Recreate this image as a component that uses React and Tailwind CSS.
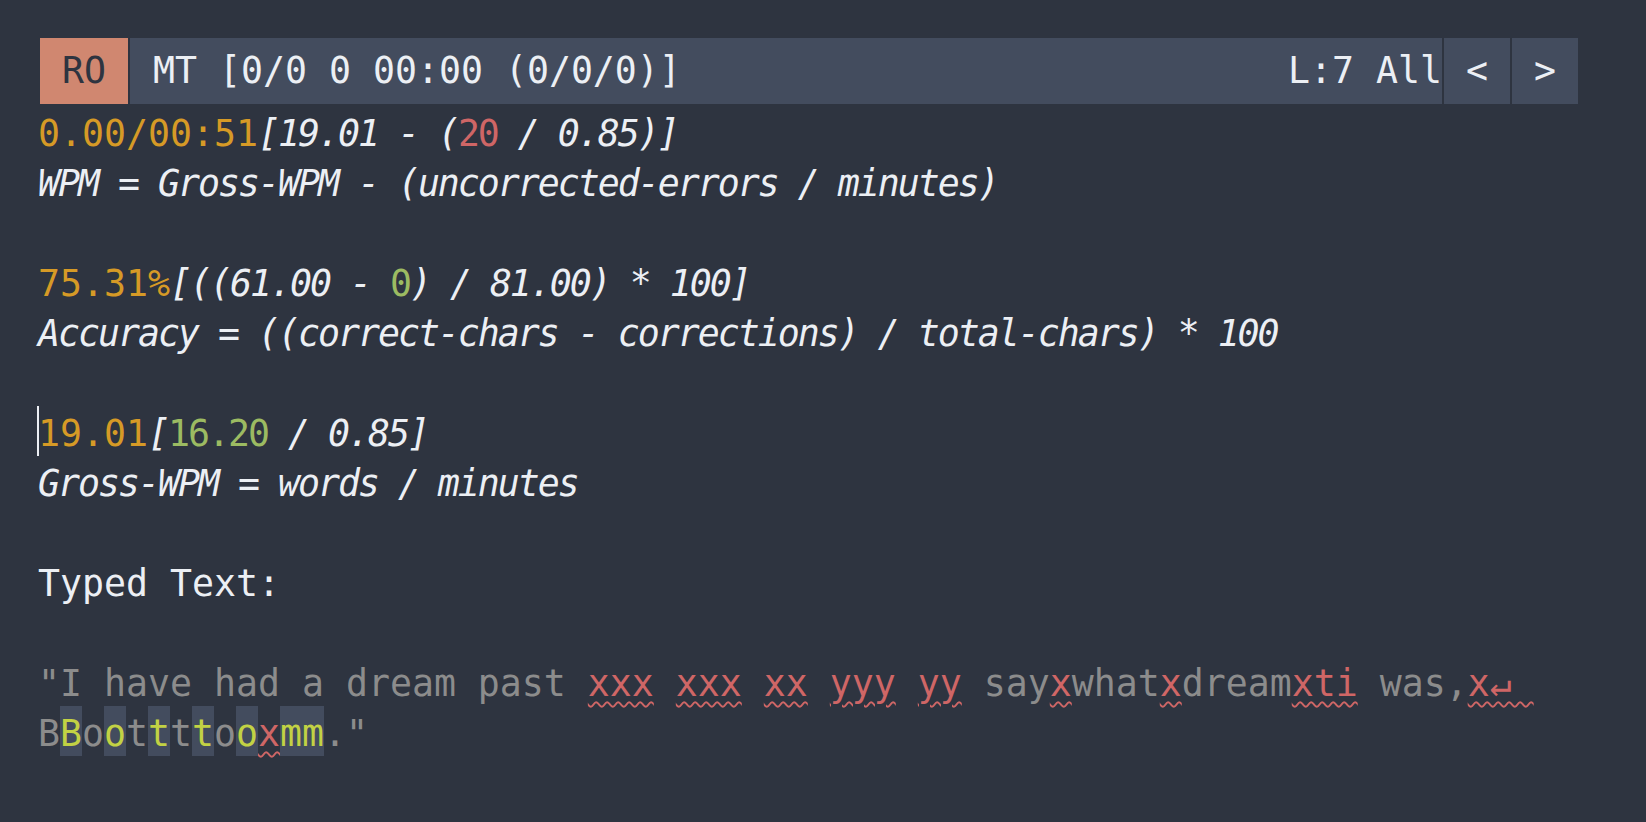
const mono = "font-['DejaVu_Sans_Mono','Liberation_Mono',monospace]";

const it = "italic tracking-[-2px]";
const gold = "text-[#d69a26]";
const green = "tracking-[-2px] text-[#9cbb62]";
const err = "text-[#cf6666] underline decoration-wavy decoration-[#cf6666] decoration-[1.5px] underline-offset-[5px]";
const gray = "text-[#8c8c8c]";
const hit = "inline-block h-[50px] align-top leading-[56px] text-[#c2d244] bg-[#434c5e]";

function Row({ children, className = "" }) {
  return <div className={`h-[50px] leading-[56px] whitespace-pre ${className}`}>{children}</div>;
}

function ModeLine() {
  return (
    <div className="ml-[2px] flex h-[66px] w-[1538px] gap-[2px] leading-[66px] text-[#eceff4]">
      <div className="w-[88px] bg-[#d08770] text-center text-[#2e3440]">RO</div>
      <div className="flex flex-1 justify-between bg-[#434c5e] pl-[23px] whitespace-pre">
        <span>MT [0/0 0 00:00 (0/0/0)]</span>
        <span>L:7 All</span>
      </div>
      <div className="w-[66px] bg-[#434c5e] text-center">&lt;</div>
      <div className="w-[66px] bg-[#434c5e] text-center">&gt;</div>
    </div>
  );
}

export default function App() {
  return (
    <div className={`min-h-screen bg-[#2e3440] pl-[38px] pt-[38px] text-[36.54px] text-[#eceff4] ${mono}`}>
      <ModeLine />
      <div className="mt-[2px]">
        <Row>
          <span className={gold}>0.00/00:51</span>
          <span className={it}>[19.01 - (</span>
          <span className="tracking-[-2px] text-[#cf6666]">20</span>
          <span className={it}> / 0.85)]</span>
        </Row>
        <Row className={it}>WPM = Gross-WPM - (uncorrected-errors / minutes)</Row>
        <Row />
        <Row>
          <span className={gold}>75.31%</span>
          <span className={it}>[((61.00 - </span>
          <span className={green}>0</span>
          <span className={it}>) / 81.00) * 100]</span>
        </Row>
        <Row className={it}>Accuracy = ((correct-chars - corrections) / total-chars) * 100</Row>
        <Row />
        <Row className="relative">
          <span className="absolute left-[-1px] top-0 h-[50px] w-[2px] bg-[#eceff4]" />
          <span className={gold}>19.01</span>
          <span className={it}>[</span>
          <span className={green}>16.20</span>
          <span className={it}> / 0.85]</span>
        </Row>
        <Row className={it}>Gross-WPM = words / minutes</Row>
        <Row />
        <Row>Typed Text:</Row>
        <Row />
        <Row className={gray}>
          <span>"I have had a dream past </span>
          <span className={err}>xxx</span> <span className={err}>xxx</span>{" "}
          <span className={err}>xx</span> <span className={err}>yyy</span>{" "}
          <span className={err}>yy</span>
          <span> say</span>
          <span className={err}>x</span>
          <span>what</span>
          <span className={err}>x</span>
          <span>dream</span>
          <span className={err}>xti</span>
          <span> was,</span>
          <span className={err}>x↵ </span>
        </Row>
        <Row className={gray}>
          <span>B</span>
          <span className={hit}>B</span>
          <span>o</span>
          <span className={hit}>o</span>
          <span>t</span>
          <span className={hit}>t</span>
          <span>t</span>
          <span className={hit}>t</span>
          <span>o</span>
          <span className={hit}>o</span>
          <span className={err}>x</span>
          <span className={hit}>mm</span>
          <span>."</span>
        </Row>
      </div>
    </div>
  );
}
